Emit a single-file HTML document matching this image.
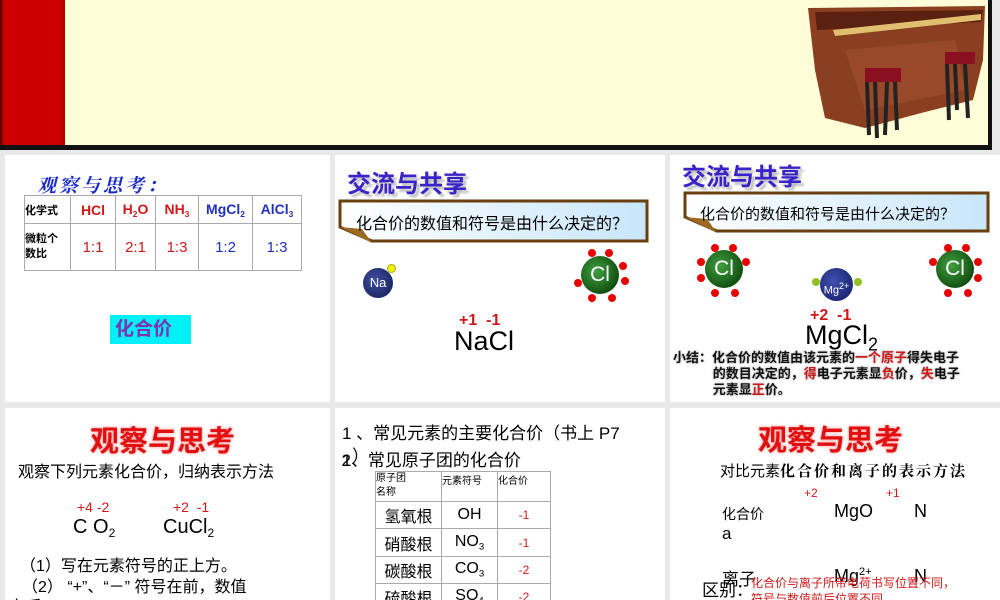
<!DOCTYPE html>
<html style="width:1000px;height:600px;overflow:hidden"><head><meta charset="utf-8"><style>
*{margin:0;padding:0;box-sizing:border-box}
body{width:1000px;height:600px;overflow:hidden;background:#e9e9e9;position:relative;font-family:"Liberation Sans","Noto Sans CJK SC",sans-serif;color:#000}
.a{position:absolute;white-space:nowrap}
.p{position:absolute;background:#fff;overflow:hidden}
.red{color:#d01818}
.ball{position:absolute;border-radius:50%;color:#fff;text-align:center;font-family:"Liberation Sans",sans-serif}
.dot{position:absolute;width:8px;height:8px;border-radius:50%;background:#e80000}
table{border-collapse:collapse;position:absolute}
td{border:1px solid #aaa;text-align:center}
.tt{font-weight:bold;color:#3a22c8;text-shadow:3px 3px 2px #bbb;font-size:24px}
.rt{font-weight:bold;color:#e01010;font-size:29px;text-shadow:0 0 3px #f88}
sub{font-size:60%;vertical-align:-30%}
</style></head><body>
<div class="a" style="left:0;top:0;width:992px;height:150px;background:#fffcd8;border-right:4px solid #111;border-bottom:5px solid #111"></div>
<div class="a" style="left:0;top:0;width:65px;height:145px;background:linear-gradient(90deg,#4a0000 0,#c00 4px,#c00 60px,#a00 65px)"></div>
<svg class="a" style="left:805px;top:0" width="182" height="142" viewBox="0 0 182 142">
<path d="M3 8 L180 6 L178 60 L168 100 L120 112 L60 128 L20 118 L10 70 Z" fill="#8a4020"/>
<path d="M10 12 L178 10 L176 22 L12 30 Z" fill="#5a2010"/>
<path d="M28 30 L176 14 L176 20 L30 36 Z" fill="#e0c070"/>
<path d="M40 50 L150 40 L160 90 L60 110 Z" fill="#a05030" opacity=".6"/>
<rect x="60" y="68" width="36" height="14" fill="#8a1020"/>
<rect x="140" y="52" width="30" height="12" fill="#8a1020"/>
<path d="M62 82 L64 135 M70 82 L72 138 M90 82 L92 130 M82 82 L80 135 M142 64 L144 120 M160 64 L163 118 M150 64 L152 110" stroke="#222" stroke-width="4"/>
</svg>

<div class="p" style="left:5px;top:155px;width:325px;height:247px"></div>
<div class="a" style="left:37px;top:171px;font-size:19px;font-weight:bold;font-style:italic;color:#1a2ac8;letter-spacing:3px;font-family:'Liberation Serif','Noto Serif CJK SC',serif">观察与思考：</div>
<table style="left:24px;top:195px;width:278px;font-size:13px">
<tr style="height:28px"><td style="width:46px;font-size:11px;font-weight:bold;text-align:left">化学式</td><td class="red" style="width:45px;font-weight:bold;font-size:14px">HCl</td><td class="red" style="width:40px;font-weight:bold;font-size:14px">H<sub>2</sub>O</td><td class="red" style="width:43px;font-weight:bold;font-size:14px">NH<sub>3</sub></td><td style="width:54px;font-weight:bold;color:#2030c0;font-size:14px">MgCl<sub>2</sub></td><td style="font-weight:bold;color:#2030c0;font-size:14px">AlCl<sub>3</sub></td></tr>
<tr style="height:47px"><td style="font-size:11px;font-weight:bold;text-align:left;line-height:15px">微粒个<br>数比</td><td class="red" style="font-size:15px">1:1</td><td class="red" style="font-size:15px">2:1</td><td class="red" style="font-size:15px">1:3</td><td style="color:#2030c0;font-size:15px">1:2</td><td style="color:#2030c0;font-size:15px">1:3</td></tr>
</table>
<div class="a" style="left:110px;top:315px;width:81px;height:29px;background:#00f0f8;color:#8030b0;font-size:19px;font-weight:bold;line-height:29px;padding-left:5px">化合价</div>

<div class="p" style="left:335px;top:155px;width:330px;height:247px"></div>
<div class="a tt" style="left:347px;top:164px">交流与共享</div>
<svg class="a" style="left:338px;top:199px" width="312" height="46"><defs><linearGradient id="g" x1="0" x2="1"><stop offset="0" stop-color="#fff"/><stop offset="1" stop-color="#c8e6fa"/></linearGradient></defs>
<path d="M2 2 H309 V42 H34 L2 28 Z" fill="url(#g)" stroke="#6a4010" stroke-width="3"/>
<path d="M2 28 L34 44 L24 30 Z" fill="#9a6a20"/></svg>
<div class="a" style="left:356px;top:210px;font-size:16px">化合价的数值和符号是由什么决定的？</div>
<div class="ball" style="left:363px;top:268px;width:30px;height:30px;background:radial-gradient(circle at 40% 40%,#4050a0,#101850);font-size:13px;line-height:30px">Na</div>
<div class="a" style="left:387px;top:264px;width:9px;height:9px;border-radius:50%;background:#f0f000;border:1px solid #aa0"></div>
<div class="ball" style="left:581px;top:256px;width:38px;height:38px;background:radial-gradient(circle at 40% 40%,#40a040,#003000);font-size:21px;line-height:38px">Cl</div>
<div class="dot" style="left:588px;top:249px"></div><div class="dot" style="left:605px;top:249px"></div>
<div class="dot" style="left:619px;top:262px"></div><div class="dot" style="left:621px;top:277px"></div>
<div class="dot" style="left:574px;top:279px"></div>
<div class="dot" style="left:588px;top:294px"></div><div class="dot" style="left:608px;top:294px"></div>
<div class="a red" style="left:459px;top:312px;font-size:16px;font-weight:bold">+1 &nbsp;-1</div>
<div class="a" style="left:454px;top:326px;font-size:27px">NaCl</div>

<div class="p" style="left:670px;top:155px;width:330px;height:247px"></div>
<div class="a tt" style="left:682px;top:157px">交流与共享</div>
<svg class="a" style="left:683px;top:191px" width="310" height="45">
<path d="M2 2 H305 V40 H34 L2 26 Z" fill="url(#g)" stroke="#6a4010" stroke-width="3"/>
<path d="M2 26 L34 42 L24 28 Z" fill="#9a6a20"/></svg>
<div class="a" style="left:700px;top:203px;font-size:15px">化合价的数值和符号是由什么决定的？</div>
<div class="ball" style="left:705px;top:250px;width:38px;height:38px;background:radial-gradient(circle at 40% 40%,#40a040,#003000);font-size:21px;line-height:38px">Cl</div>
<div class="dot" style="left:711px;top:244px"></div><div class="dot" style="left:729px;top:244px"></div>
<div class="dot" style="left:742px;top:258px"></div><div class="dot" style="left:697px;top:258px"></div>
<div class="dot" style="left:697px;top:274px"></div>
<div class="dot" style="left:711px;top:289px"></div><div class="dot" style="left:731px;top:289px"></div>
<div class="ball" style="left:936px;top:250px;width:38px;height:38px;background:radial-gradient(circle at 40% 40%,#40a040,#003000);font-size:21px;line-height:38px">Cl</div>
<div class="dot" style="left:944px;top:244px"></div><div class="dot" style="left:962px;top:244px"></div>
<div class="dot" style="left:929px;top:258px"></div><div class="dot" style="left:974px;top:258px"></div>
<div class="dot" style="left:974px;top:274px"></div>
<div class="dot" style="left:944px;top:289px"></div><div class="dot" style="left:964px;top:289px"></div>
<div class="ball" style="left:820px;top:268px;width:33px;height:33px;background:radial-gradient(circle at 40% 40%,#4050b0,#101860);font-size:11px;line-height:36px">Mg<sup style="font-size:9px">2+</sup></div>
<div class="a" style="left:812px;top:278px;width:8px;height:8px;border-radius:50%;background:#90c020"></div>
<div class="a" style="left:854px;top:278px;width:8px;height:8px;border-radius:50%;background:#90c020"></div>
<div class="a red" style="left:810px;top:307px;font-size:16px;font-weight:bold">+2 &nbsp;-1</div>
<div class="a" style="left:805px;top:320px;font-size:27px">MgCl<sub style="font-size:18px">2</sub></div>
<div class="a" style="left:673px;top:350px;font-size:13px;font-weight:bold;line-height:16px;color:#111;text-shadow:0 0 2px #999">小结：化合价的数值由该元素的<span class="red">一个原子</span>得失电子<br>&nbsp;&nbsp;&nbsp;&nbsp;&nbsp;&nbsp;&nbsp;&nbsp;&nbsp;&nbsp;&nbsp;的数目决定的，<span class="red">得</span>电子元素显<span class="red">负</span>价，<span class="red">失</span>电子<br>&nbsp;&nbsp;&nbsp;&nbsp;&nbsp;&nbsp;&nbsp;&nbsp;&nbsp;&nbsp;&nbsp;元素显<span class="red">正</span>价。</div>

<div class="p" style="left:5px;top:408px;width:325px;height:192px"></div>
<div class="a rt" style="left:90px;top:418px">观察与思考</div>
<div class="a" style="left:18px;top:458px;font-size:16px">观察下列元素化合价，归纳表示方法</div>
<div class="a red" style="left:77px;top:499px;font-size:14px">+4 -2</div>
<div class="a red" style="left:173px;top:499px;font-size:14px">+2 &nbsp;-1</div>
<div class="a" style="left:73px;top:516px;font-size:20px">C O<sub style="font-size:12px">2</sub></div>
<div class="a" style="left:163px;top:516px;font-size:20px">CuCl<sub style="font-size:12px">2</sub></div>
<div class="a" style="left:20px;top:552px;font-size:16px">（1）写在元素符号的正上方。</div>
<div class="a" style="left:22px;top:573px;font-size:16px">（2） “+”、“－” 符号在前，数值</div>
<div class="a" style="left:10px;top:593px;font-size:16px">在后</div>

<div class="p" style="left:335px;top:408px;width:330px;height:192px"></div>
<div class="a" style="left:342px;top:419px;font-size:17px">1 、常见元素的主要化合价（书上 P7</div>
<div class="a" style="left:342px;top:446px;font-size:17px">1<span style="margin-left:-10px">2</span>、常见原子团的化合价</div>
<div class="a" style="left:352px;top:442px;font-size:17px">）</div>
<table style="left:375px;top:471px;width:176px;font-size:16px">
<tr style="height:30px;font-size:10px"><td style="width:66px;text-align:left;vertical-align:top;line-height:14px">原子团<br>名称</td><td style="width:56px;text-align:left;vertical-align:top">元素符号</td><td style="text-align:left;vertical-align:top">化合价</td></tr>
<tr style="height:27px"><td>氢氧根</td><td>OH</td><td class="red" style="font-size:12px">-1</td></tr>
<tr style="height:28px"><td>硝酸根</td><td>NO<sub>3</sub></td><td class="red" style="font-size:12px">-1</td></tr>
<tr style="height:27px"><td>碳酸根</td><td>CO<sub>3</sub></td><td class="red" style="font-size:12px">-2</td></tr>
<tr style="height:27px"><td>硫酸根</td><td>SO<sub>4</sub></td><td class="red" style="font-size:12px">-2</td></tr>
</table>

<div class="p" style="left:670px;top:408px;width:330px;height:192px"></div>
<div class="a rt" style="left:758px;top:417px">观察与思考</div>
<div class="a" style="left:720px;top:460px;font-size:15px">对比元素<b style="font-family:'Liberation Serif','Noto Serif CJK SC',serif;letter-spacing:2px">化合价和离子的表示方法</b></div>
<div class="a red" style="left:804px;top:486px;font-size:12px">+2</div>
<div class="a red" style="left:886px;top:486px;font-size:12px">+1</div>
<div class="a" style="left:722px;top:504px;font-size:14px">化合价</div>
<div class="a" style="left:834px;top:501px;font-size:18px">MgO</div>
<div class="a" style="left:914px;top:501px;font-size:18px">N</div>
<div class="a" style="left:722px;top:524px;font-size:17px">a</div>
<div class="a" style="left:722px;top:565px;font-size:17px">离子</div>
<div class="a" style="left:834px;top:566px;font-size:18px">Mg<sup style="font-size:11px">2+</sup></div>
<div class="a" style="left:914px;top:566px;font-size:18px">N</div>
<div class="a" style="left:702px;top:576px;font-size:17px">区别：</div>
<div class="a red" style="left:751px;top:575px;font-size:12px;line-height:16px">化合价与离子所带电荷书写位置不同，<br>符号与数值前后位置不同</div>
</body></html>
